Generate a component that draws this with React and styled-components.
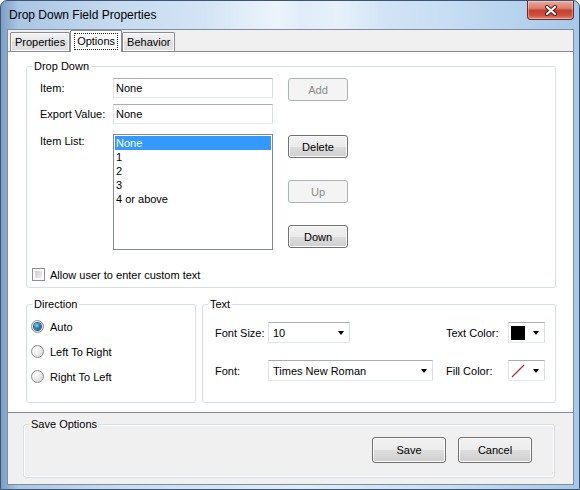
import React from 'react'
import styled, { createGlobalStyle } from 'styled-components'

const GlobalStyle = createGlobalStyle`
    html, body {
        margin: 0;
        padding: 0;
        background: #fff;
    }
    body {
        font-family: "Liberation Sans", Arial, sans-serif;
        font-size: 11px;
        color: #000;
    }
    * {
        box-sizing: border-box;
    }
`

const App = () => {
    return (
        <>
            <GlobalStyle />
            <Window>
                <TitleBar>
                    <Title>Drop Down Field Properties</Title>
                    <CloseButton>
                        <svg width="14" height="11" viewBox="0 0 14 11">
                            <path d="M3 2 L11 9 M11 2 L3 9" stroke="#4a1616" strokeWidth="4" strokeLinecap="round" />
                            <path d="M3 2 L11 9 M11 2 L3 9" stroke="#fff" strokeWidth="2.2" strokeLinecap="round" />
                        </svg>
                    </CloseButton>
                </TitleBar>
                <Client>
                    <TabStrip>
                        <Tab>Properties</Tab>
                        <Tab $active><Focus>Options</Focus></Tab>
                        <Tab>Behavior</Tab>
                    </TabStrip>
                    <TabPanel>
                        <Group>
                            <Legend>Drop Down</Legend>
                            <DropBody>
                                <FieldGrid>
                                    <Label>Item:</Label>
                                    <TextInput defaultValue="None" readOnly />
                                    <Button disabled>Add</Button>

                                    <Label>Export Value:</Label>
                                    <TextInput defaultValue="None" readOnly />
                                    <span />

                                    <Label $top>Item List:</Label>
                                    <ListBox>
                                        <ListItem $selected>None</ListItem>
                                        <ListItem>1</ListItem>
                                        <ListItem>2</ListItem>
                                        <ListItem>3</ListItem>
                                        <ListItem>4 or above</ListItem>
                                    </ListBox>
                                    <ButtonColumn>
                                        <Button>Delete</Button>
                                        <Button disabled>Up</Button>
                                        <Button>Down</Button>
                                    </ButtonColumn>
                                </FieldGrid>
                                <CheckRow>
                                    <CheckBox />
                                    <span>Allow user to enter custom text</span>
                                </CheckRow>
                            </DropBody>
                        </Group>
                        <GroupRow>
                            <Group $width={170}>
                                <Legend>Direction</Legend>
                                <RadioList>
                                    <RadioRow><Radio $checked /><span>Auto</span></RadioRow>
                                    <RadioRow><Radio /><span>Left To Right</span></RadioRow>
                                    <RadioRow><Radio /><span>Right To Left</span></RadioRow>
                                </RadioList>
                            </Group>
                            <Group>
                                <Legend>Text</Legend>
                                <TextGrid>
                                    <Label>Font Size:</Label>
                                    <Combo $width={82}>
                                        <span>10</span>
                                        <Arrow />
                                    </Combo>
                                    <Label>Text Color:</Label>
                                    <ColorPicker>
                                        <Swatch $color="#000" />
                                        <Arrow />
                                    </ColorPicker>

                                    <Label>Font:</Label>
                                    <Combo $width={165}>
                                        <span>Times New Roman</span>
                                        <Arrow />
                                    </Combo>
                                    <Label>Fill Color:</Label>
                                    <ColorPicker>
                                        <Swatch $color="#fff">
                                            <svg width="14" height="14" viewBox="0 0 14 14">
                                                <path d="M1 13 L13 1" stroke="#b3263a" strokeWidth="1.2" />
                                            </svg>
                                        </Swatch>
                                        <Arrow />
                                    </ColorPicker>
                                </TextGrid>
                            </Group>
                        </GroupRow>
                    </TabPanel>
                    <BottomArea>
                        <Group $bg="#f0f0f0">
                            <Legend>Save Options</Legend>
                            <ActionRow>
                                <Button $w={74} $h={26}>Save</Button>
                                <Button $w={74} $h={26}>Cancel</Button>
                            </ActionRow>
                        </Group>
                    </BottomArea>
                </Client>
            </Window>
        </>
    )
}

const Window = styled.div`
    width: 580px;
    height: 490px;
    display: flex;
    flex-direction: column;
    border: 1px solid #3d5572;
    border-radius: 7px 7px 0 0;
    overflow: hidden;
    background: linear-gradient(90deg, #7c9ec6 0%, #a9c6e4 3%, #c6dbf0 20%, #e0edf9 52%, #c6ddf3 78%, #a7c8e8 100%);
`
const TitleBar = styled.div`
    height: 28px;
    flex: none;
    display: flex;
    justify-content: space-between;
    align-items: flex-start;
    padding-left: 8px;
    background: linear-gradient(90deg, transparent 35%, rgba(255,255,255,0.45) 48%, transparent 52%, rgba(255,255,255,0.35) 58%, transparent 66%);
`
const Title = styled.div`
    font-size: 12px;
    line-height: 14px;
    padding-top: 7px;
    color: #000;
`
const CloseButton = styled.div`
    width: 47px;
    height: 19px;
    margin-right: 5px;
    border: 1px solid #6b2b27;
    border-top: none;
    border-radius: 0 0 4px 4px;
    display: flex;
    align-items: center;
    justify-content: center;
    background: linear-gradient(#eaa99c 0%, #dc7f6c 40%, #c7402f 52%, #cc4e3a 78%, #e38a73 100%);
    box-shadow: inset 0 0 0 1px rgba(255,255,255,0.35);
`
const Client = styled.div`
    flex: 1;
    margin: 0 5px 4px 6px;
    border: 1px solid #7f8d9c;
    background: #f0f0f0;
    display: flex;
    flex-direction: column;
`
const TabStrip = styled.div`
    height: 21px;
    flex: none;
    display: flex;
    align-items: flex-end;
    padding-left: 2px;
`
const Tab = styled.div`
    height: ${p => p.$active ? 22 : 19}px;
    margin-bottom: ${p => p.$active ? -1 : 0}px;
    position: relative;
    z-index: ${p => p.$active ? 1 : 0};
    padding: ${p => p.$active ? '0 3px' : '0 4px'};
    display: flex;
    align-items: ${p => p.$active ? 'flex-start' : 'center'};
    padding-top: ${p => p.$active ? 2 : 0}px;
    border: 1px solid #898c95;
    border-bottom: none;
    border-radius: 2px 2px 0 0;
    background: ${p => p.$active ? '#fff' : 'linear-gradient(#f3f3f3, #e6e6e6 50%, #dcdcdc 51%, #e3e3e3)'};
    box-shadow: ${p => p.$active ? 'none' : 'inset 0 0 0 1px rgba(255,255,255,0.8)'};
    line-height: 13px;
`
const Focus = styled.span`
    padding: 1px 2px;
    border: 1px dotted #222;
    line-height: 13px;
`
const TabPanel = styled.div`
    flex: none;
    background: #fff;
    border-top: 1px solid #898c95;
    border-bottom: 1px solid #898c95;
    padding: 8px 17px 9px 18px;
`
const Group = styled.fieldset`
    margin: 0;
    padding: 0;
    min-width: 0;
    border: 1px solid #d5dfe5;
    border-radius: 3px;
    background: ${p => p.$bg || '#fff'};
    box-shadow: inset 0 0 0 1px rgba(255,255,255,0.9);
    ${p => p.$width ? `width: ${p.$width}px; flex: none;` : 'flex: 1;'}
`
const Legend = styled.legend`
    margin-left: 5px;
    padding: 0 2px;
    line-height: 13px;
    font-size: 11px;
`
const DropBody = styled.div`
    padding: 5px 0 6px 0;
`
const FieldGrid = styled.div`
    display: grid;
    grid-template-columns: 73px 160px 60px;
    grid-template-rows: 26px 30px 116px;
    column-gap: 0;
    margin-left: 13px;
    align-items: start;
    & > *:nth-child(3n) {
        margin-left: 15px;
    }
`
const Label = styled.div`
    line-height: ${p => p.$top ? '13px' : '20px'};
    padding-top: ${p => p.$top ? 1 : 0}px;
    white-space: nowrap;
`
const TextInput = styled.input`
    width: 160px;
    height: 20px;
    margin: 0;
    padding: 0 2px;
    font: 11px "Liberation Sans", Arial, sans-serif;
    color: #000;
    border: 1px solid;
    border-color: #abadb3 #dbdfe6 #e3e9ef #e2e3ea;
    outline: none;
    background: #fff;
`
const ListBox = styled.div`
    width: 160px;
    height: 116px;
    border: 1px solid #828790;
    padding: 1px;
    background: #fff;
`
const ListItem = styled.div`
    height: 14px;
    line-height: 14px;
    padding-left: 1px;
    background: ${p => p.$selected ? '#3399ff' : 'transparent'};
    color: ${p => p.$selected ? '#fff' : '#000'};
`
const ButtonColumn = styled.div`
    display: flex;
    flex-direction: column;
    gap: 22px;
    margin-top: 1px;
`
const Button = styled.button`
    width: ${p => p.$w || 60}px;
    height: ${p => p.$h || 23}px;
    margin: 0;
    padding: 0;
    font: 11px "Liberation Sans", Arial, sans-serif;
    border-radius: 3px;
    border: 1px solid ${p => p.disabled ? '#adb2b5' : '#707070'};
    color: ${p => p.disabled ? '#8a8a8a' : '#000'};
    background: ${p => p.disabled ? '#f4f4f4' : 'linear-gradient(#f2f2f2 0%, #ebebeb 50%, #dddddd 51%, #cfcfcf 100%)'};
    box-shadow: inset 0 0 0 1px ${p => p.disabled ? 'transparent' : '#fcfcfc'};
`
const CheckRow = styled.div`
    display: flex;
    align-items: center;
    gap: 5px;
    height: 13px;
    margin: 18px 0 0 5px;
`
const CheckBox = styled.span`
    width: 13px;
    height: 13px;
    flex: none;
    border: 1px solid #8f8f8f;
    padding: 2px;
    background: #fff;
    &::after {
        content: '';
        display: block;
        width: 100%;
        height: 100%;
        background: linear-gradient(135deg, #c7cbd1, #f4f4f4);
    }
`
const GroupRow = styled.div`
    display: flex;
    gap: 6px;
    margin-top: 10px;
`
const RadioList = styled.div`
    display: flex;
    flex-direction: column;
    gap: 12px;
    padding: 9px 0 0 4px;
`
const RadioRow = styled.div`
    display: flex;
    align-items: center;
    gap: 6px;
    height: 13px;
`
const Radio = styled.span`
    width: 13px;
    height: 13px;
    flex: none;
    border-radius: 50%;
    border: 1px solid #8e8f8f;
    background: radial-gradient(circle at 35% 35%, #ffffff 0%, #ececec 45%, #c9c9c9 100%);
    display: flex;
    align-items: center;
    justify-content: center;
    &::after {
        content: '';
        display: ${p => p.$checked ? 'block' : 'none'};
        width: 7px;
        height: 7px;
        border-radius: 50%;
        background: radial-gradient(circle at 40% 35%, #8fd3f5 0%, #2a7db8 45%, #0f4a78 100%);
        box-shadow: 0 0 0 1px #235a86;
    }
`
const TextGrid = styled.div`
    display: grid;
    grid-template-columns: 53px 178px 62px 37px;
    row-gap: 17px;
    padding: 11px 0 21px 12px;
    align-items: center;
`
const Combo = styled.div`
    width: ${p => p.$width}px;
    height: 21px;
    border: 1px solid;
    border-color: #abadb3 #dbdfe6 #e3e9ef #e2e3ea;
    background: #fff;
    display: flex;
    align-items: center;
    justify-content: space-between;
    padding: 0 5px 0 4px;
`
const Arrow = styled.span`
    width: 0;
    height: 0;
    border-left: 3.5px solid transparent;
    border-right: 3.5px solid transparent;
    border-top: 4px solid #000;
`
const ColorPicker = styled.div`
    width: 37px;
    height: 21px;
    border: 1px solid;
    border-color: #abadb3 #dbdfe6 #e3e9ef #e2e3ea;
    background: #fff;
    display: flex;
    align-items: center;
    justify-content: space-between;
    padding: 0 5px 0 2px;
`
const Swatch = styled.span`
    width: 14px;
    height: 14px;
    background: ${p => p.$color};
    display: flex;
    svg {
        display: block;
    }
`
const BottomArea = styled.div`
    padding: 5px 18px 0 15px;
`
const ActionRow = styled.div`
    display: flex;
    justify-content: flex-end;
    gap: 12px;
    padding: 6px 22px 14px 0;
`

export default App
